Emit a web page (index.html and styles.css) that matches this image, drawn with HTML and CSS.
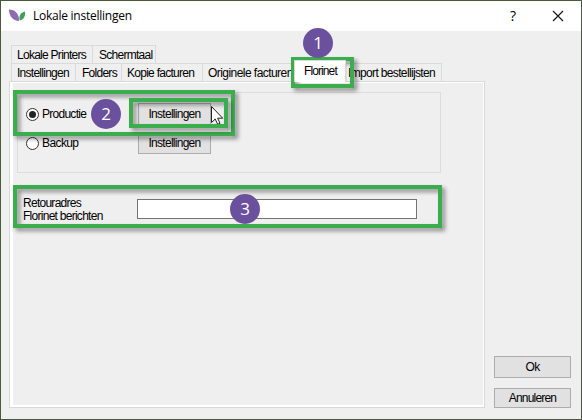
FILE: index.html
```html
<!DOCTYPE html>
<html lang="nl">
<head>
<meta charset="utf-8">
<title>Lokale instellingen</title>
<link rel="stylesheet" href="styles.css">
</head>
<body>
<div class="window">
  <header class="titlebar">
    <svg class="logo" width="17" height="13" viewBox="0 0 17 13"><path d="M0 .5C6 .5 10.5 5 10 12C4 12 0 7 0 .5Z" fill="#8c6bae"/><path d="M16 2.5C11.5 3.5 9.5 7 10.8 11.5C15 10.5 16.500 7 16 2.500Z" fill="#3fa355"/></svg>
    <h1>Lokale instellingen</h1>
    <span class="help">?</span>
    <svg class="close" width="12" height="12" viewBox="0 0 12 12"><path d="M1 1L11 11M11 1L1 11" stroke="#111" stroke-width="1.1"/></svg>
  </header>
  <main class="body">
    <section class="tabs">
      <nav class="row">
        <span class="tab w81"><b>Lokale Printers</b></span><span class="tab w63 last"><b>Schermtaal</b></span>
      </nav>
      <nav class="row">
        <span class="tab w64"><b>Instellingen</b></span><span class="tab w46"><b>Folders</b></span><span class="tab w81"><b>Kopie facturen</b></span><span class="tab w93"><b class="t-orig">Originele facturen</b></span><span class="tab active"><b class="t-flor">Florinet</b></span><span class="tab import last"><b class="t-import">Import bestellijsten</b></span>
      </nav>
      <div class="panel">
        <div class="group">
          <div class="option"><i class="radio on"></i><b>Productie</b><button><b>Instellingen</b></button></div>
          <div class="option"><i class="radio"></i><b class="t-backup">Backup</b><button><b>Instellingen</b></button></div>
        </div>
        <div class="field">
          <label><b>Retouradres</b><b>Florinet berichten</b></label>
          <input type="text">
        </div>
      </div>
    </section>
    <aside class="actions">
      <button class="ok"><b>Ok</b></button>
      <button class="cancel"><b>Annuleren</b></button>
    </aside>
  </main>
  <svg class="cursor" width="13" height="19" viewBox="0 0 13 19"><path d="M.5 .5V16.5L4.2 13L6.7 18.3L9 17.2L6.6 12.2H11.7Z" fill="#fff" stroke="#222"/></svg>
  <div class="mark mark-tab"></div>
  <div class="mark mark-option"></div>
  <div class="mark mark-button"></div>
  <div class="mark mark-field"></div>
  <span class="badge one">1</span>
  <span class="badge two">2</span>
  <span class="badge three">3</span>
</div>
</body>
</html>
```
FILE: styles.css
```css
* { box-sizing: border-box; }
body { margin: 0; font: 12px/14px "Liberation Sans", sans-serif; color: #000; }
b { font-weight: 400; display: block; white-space: nowrap; letter-spacing: -.73px; }
.window { position: relative; width: 582px; height: 420px; border: 1px solid #4b593e; background: #efefef; overflow: hidden; }
.titlebar { height: 30px; background: #fff; display: flex; align-items: center; padding: 0 17px 0 8px; }
.logo { margin-top: -2px; }
h1 { margin: 0 auto 0 7px; font: 12px/16px "Open Sans", sans-serif; letter-spacing: -.25px; }
.help { font: 14px/16px "Open Sans", sans-serif; margin-right: 36px; }
.close { display: block; }
.body { display: flex; height: 388px; }
.tabs { width: 476px; margin: 14px 0 0 8px; }
.row { display: flex; height: 18px; padding-left: 2px; }
.tab { height: 18px; border: 1px solid #dadada; border-width: 1px 0 0 1px; padding: 2px 0 0 5px; }
.last { border-right-width: 1px; }
.w81 { width: 81px; }
.w63 { width: 64px; padding-left: 6px; }
.w64 { width: 64px; }
.w46 { width: 46px; padding-left: 6px; }
.w93 { width: 92px; }
.active { width: 52px; height: 22px; margin-top: -3px; background: #fff; border-right-width: 1px; padding: 3px 0 0 9px; position: relative; z-index: 1; }
.import { width: 96px; padding-left: 1px; }
.panel { height: 327px; border: 1px solid #d9d9d9; box-shadow: inset 3px 1px #fff, inset -1px -2px #fff; padding: 10px 0 0 7px; }
.group { width: 424px; height: 81px; border: 1px solid #dcdcdc; padding: 10px 0 0 8px; }
.option { display: flex; align-items: center; height: 22px; margin-bottom: 7px; }
.radio { width: 13px; height: 13px; border: 1px solid #333; border-radius: 50%; background: #fff; margin-right: 3px; display: grid; place-items: center; }
.on::after { content: ""; width: 7px; height: 7px; border-radius: 50%; background: #222; }
button { height: 22px; border: 1px solid #adadad; background: #e1e1e1; padding: 0; font: inherit; color: #000; display: grid; place-items: center; }
.option button { width: 73px; margin-left: auto; margin-right: 229px; }
.field { display: flex; margin: 23px 0 0 6px; }
label { width: 114px; padding-top: 1px; font-size: 12px; line-height: 13px; }
input { width: 280px; height: 20px; margin: 3px 0 0; border: 1px solid #747474; background: #fff; padding: 0 4px; }
.actions { margin: 325px 0 0 9px; width: 77px; display: grid; gap: 10px; align-content: start; }
.actions button { width: 77px; }
.actions .cancel { height: 20px; }
.cancel b { letter-spacing: -.8px; }
.t-orig { letter-spacing: -.55px; }
.t-flor { letter-spacing: -.9px; }
.t-import { letter-spacing: -.65px; }
.t-backup { letter-spacing: -.6px; }
.mark { position: absolute; border: 4px solid #3bad4e; filter: drop-shadow(3px 3px 2px rgba(0,0,0,.42)); }
.mark-tab { left: 290px; top: 56px; width: 63px; height: 31px; }
.mark-option { left: 12px; top: 89px; width: 222px; height: 46px; }
.mark-button { left: 128px; top: 97px; width: 99px; height: 30px; }
.mark-field { left: 12px; top: 184px; width: 429px; height: 43px; }
.badge { position: absolute; width: 30px; height: 30px; border-radius: 50%; background: #6b519d; color: #fff; text-align: center; font: 17px/30px "Open Sans", sans-serif; }
.one { left: 302px; top: 27px; }
.two { left: 90px; top: 98px; }
.three { left: 229px; top: 193px; }
.cursor { position: absolute; left: 210px; top: 105px; }
```
